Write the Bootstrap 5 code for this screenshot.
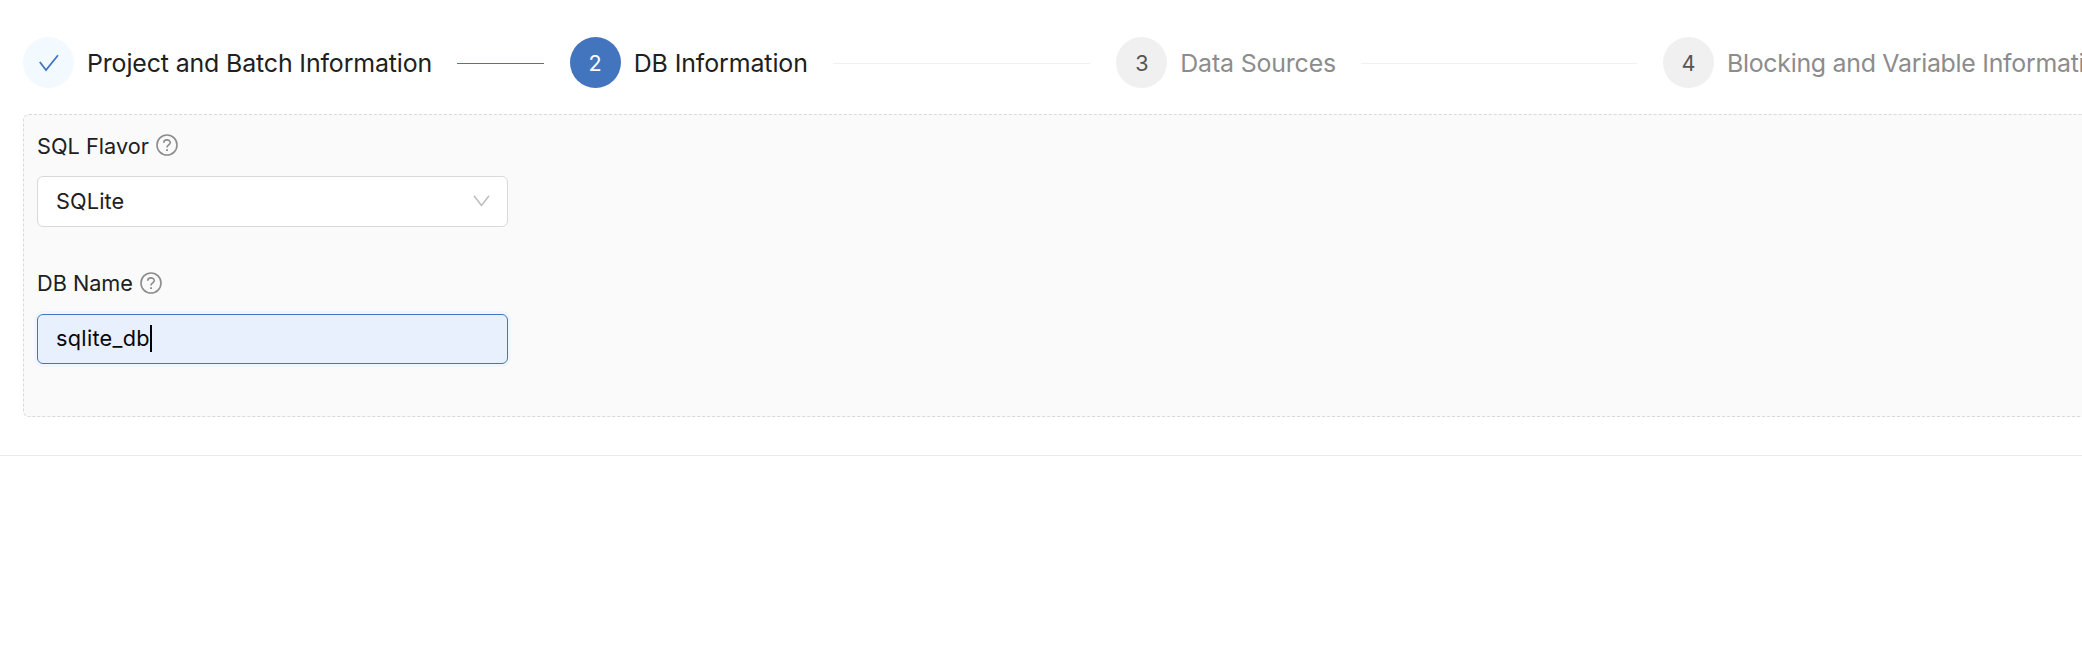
<!DOCTYPE html>
<html lang="en">
<head>
<meta charset="utf-8">
<meta name="viewport" content="width=device-width, initial-scale=1">
<title>DB Information</title>
<link href="https://cdn.jsdelivr.net/npm/bootstrap@5.3.0/dist/css/bootstrap.min.css" rel="stylesheet">
<style>
  body { font-family: Inter, "Liberation Sans", sans-serif; font-size: 21.7px; line-height: 34px; color: #202020; overflow: hidden; }
  .page { padding: 37px 0 0 23px; height: 456px; border-bottom: 1px solid #ececec; }
  .steps { width: 2300px; height: 51px; }
  .step { width: 546.67px; flex: none; }
  .step-no { width: 51px; height: 51px; margin-right: 13px; font-size: 21.6px; background: #f0f0f0; color: #555; flex: none; }
  .step-title { font-size: 24.9px; color: #8c8c8c; }
  .step-line { height: 1px; background: #f0f0f0; margin: 2px 26px 0 25px; }
  .done .step-no { background: #f2faff; }
  .done .step-line { background: #4375bf; }
  .done .step-title, .active .step-title { color: #202020; }
  .active .step-no { background: #4375bf; color: #fff; }
  .t1 { letter-spacing: -.13px; }
  .t2 { letter-spacing: -.09px; }
  .t3 { letter-spacing: -.16px; }
  .t4 { letter-spacing: -.28px; }
  .panel { width: 2300px; height: 303px; margin-top: 26px; padding: 14px 13px 13px; border: 1px dashed #d9d9d9; border-radius: 6px; background: #fafafa; }
  .field { width: 471px; height: 51px; padding: 0 17px 2px 18px; margin-top: 13px; border: 1px solid #d9d9d9; border-radius: 6px; background: #fff; }
  .field.focused { height: 50px; margin-top: 14px; background: #e8effd; border-color: #4375bf; box-shadow: 0 0 0 3px #f0f6fc; color: #080808; }
  .caret { width: 2px; height: 27px; margin-top: 1px; background: #000; }
  .help { margin: -2px 0 0 7px; }
  .group-gap { margin-top: 39px; }
  .group-gap .help { margin-top: 0; }
  .l1 { letter-spacing: .03px; }
  .l2 { letter-spacing: -.02px; }
  .v1 { letter-spacing: .13px; }
  .v2 { letter-spacing: .3px; }
</style>
</head>
<body>
<main class="page overflow-hidden">
  <div class="steps d-flex">
    <div class="step done d-flex align-items-center">
      <div class="step-no rounded-circle d-flex align-items-center justify-content-center">
        <svg width="20" height="18" viewBox="0 0 20 18" fill="none" stroke="#4375bf" stroke-width="1.8"><path d="M.8 8 7 16 19 1.2"/></svg>
      </div>
      <span class="step-title text-nowrap t1">Project and Batch Information</span>
      <div class="step-line flex-grow-1"></div>
    </div>
    <div class="step active d-flex align-items-center">
      <div class="step-no rounded-circle d-flex align-items-center justify-content-center">2</div>
      <span class="step-title text-nowrap t2">DB Information</span>
      <div class="step-line flex-grow-1"></div>
    </div>
    <div class="step d-flex align-items-center">
      <div class="step-no rounded-circle d-flex align-items-center justify-content-center">3</div>
      <span class="step-title text-nowrap t3">Data Sources</span>
      <div class="step-line flex-grow-1"></div>
    </div>
    <div class="step d-flex align-items-center">
      <div class="step-no rounded-circle d-flex align-items-center justify-content-center">4</div>
      <span class="step-title text-nowrap t4">Blocking and Variable Information</span>
    </div>
  </div>
  <div class="panel">
    <div class="d-flex align-items-center">
      <span class="l1">SQL Flavor</span>
      <svg class="help" width="22" height="22" viewBox="0 0 22 22" fill="none" stroke="#8c8c8c" stroke-width="1.6"><circle cx="11" cy="11" r="10"/><path d="M7.7 8.8C7.7 4.9 14.3 4.9 14.3 8.6 14.3 11 11 10.8 11 13.6"/><path d="M11 15.2v1.9" stroke-width="1.9"/></svg>
    </div>
    <div class="field d-flex align-items-center justify-content-between">
      <span class="v1">SQLite</span>
      <svg width="17" height="12" viewBox="0 0 17 12" fill="none" stroke="#bfbfbf" stroke-width="1.6"><path d="M1 .7 8.5 10.5 16 .7"/></svg>
    </div>
    <div class="d-flex align-items-center group-gap">
      <span class="l2">DB Name</span>
      <svg class="help" width="22" height="22" viewBox="0 0 22 22" fill="none" stroke="#8c8c8c" stroke-width="1.6"><circle cx="11" cy="11" r="10"/><path d="M7.7 8.8C7.7 4.9 14.3 4.9 14.3 8.6 14.3 11 11 10.8 11 13.6"/><path d="M11 15.2v1.9" stroke-width="1.9"/></svg>
    </div>
    <div class="field focused d-flex align-items-center">
      <span class="v2">sqlite_db</span><span class="caret"></span>
    </div>
  </div>
</main>
<script src="https://cdn.jsdelivr.net/npm/bootstrap@5.3.0/dist/js/bootstrap.bundle.min.js"></script>
</body>
</html>
